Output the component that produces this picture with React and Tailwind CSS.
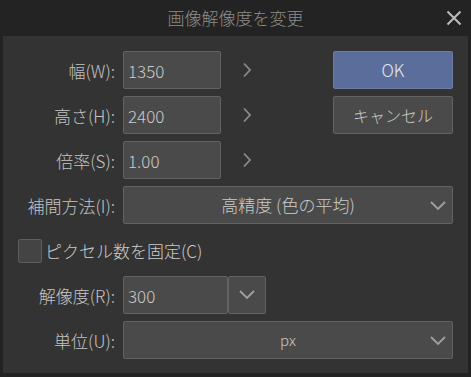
import React from "react";

const font = { fontFamily: '"Noto Sans CJK JP", "Noto Sans", sans-serif' };

function Chevron() {
  return (
    <svg width="10" height="16" viewBox="0 0 10 16" className="block">
      <path d="M2 1.5 L8 8 L2 14.5" fill="none" stroke="#8a8a8a" strokeWidth="1.8" />
    </svg>
  );
}

function Down() {
  return (
    <svg width="16" height="10" viewBox="0 0 16 10" className="block">
      <path d="M1 1 L8 8 L15 1" fill="none" stroke="#a0a0a0" strokeWidth="1.8" />
    </svg>
  );
}

function Label({ children }) {
  return (
    <div className="w-[112px] shrink-0 text-right text-[#c4c4c4] text-[17px] leading-none font-light">
      {children}
    </div>
  );
}

function Field({ value, w = "w-[98px]" }) {
  return (
    <div
      className={`${w} h-[38px] bg-[#4a4a4a] border border-[#626262] rounded-[2px] flex items-center pl-[4px] text-[#cacaca] text-[17px] leading-none font-light`}
    >
      {value}
    </div>
  );
}

export default function App() {
  return (
    <div className="w-[471px] h-[377px] bg-[#232323] flex flex-col" style={font}>
      <div className="h-[36px] shrink-0 relative flex items-center justify-center text-[#8c8c8c] text-[17px] font-light">
        画像解像度を変更
        <svg
          width="16"
          height="16"
          viewBox="0 0 16 16"
          className="absolute right-[9px] top-[10px]"
        >
          <path d="M1.5 1.5 L14.5 14.5 M14.5 1.5 L1.5 14.5" stroke="#bdbdbd" strokeWidth="2" />
        </svg>
      </div>
      <div className="mx-[3px] mb-[4px] flex-1 bg-[#333333] pt-[15px] pr-[15px] flex flex-col">
        <div className="flex">
          <div className="flex flex-col gap-[7px]">
            {[
              ["幅(W):", "1350"],
              ["高さ(H):", "2400"],
              ["倍率(S):", "1.00"],
            ].map(([l, v]) => (
              <div key={l} className="flex items-center">
                <Label>{l}</Label>
                <div className="ml-[8px]">
                  <Field value={v} />
                </div>
                <div className="ml-[21px]">
                  <Chevron />
                </div>
              </div>
            ))}
          </div>
          <div className="ml-auto flex flex-col gap-[7px] w-[120px]">
            <div className="h-[38px] bg-[#5b6e9b] border border-[#6c7ca2] rounded-[2px] flex items-center justify-center text-[#e2e6ee] text-[17px] font-light">
              OK
            </div>
            <div className="h-[38px] bg-[#4a4a4a] border border-[#626262] rounded-[2px] flex items-center justify-center text-[#cacaca] text-[16px] font-light">
              キャンセル
            </div>
          </div>
        </div>

        <div className="flex items-center mt-[7px]">
          <Label>補間方法(I):</Label>
          <div className="ml-[8px] flex-1 h-[38px] bg-[#4a4a4a] border border-[#626262] rounded-[2px] relative flex items-center justify-center text-[#cacaca] text-[17px] font-light">
            高精度 (色の平均)
            <div className="absolute right-[6px] top-[14px]">
              <Down />
            </div>
          </div>
        </div>

        <div className="flex items-center mt-[15px] ml-[15px] h-[23px]">
          <div className="w-[24px] h-[24px] bg-[#444444] border border-[#5e5e5e] rounded-[2px]" />
          <div className="ml-[3px] text-[#cacaca] text-[17px] leading-none font-light">ピクセル数を固定(C)</div>
        </div>

        <div className="flex items-center mt-[14px]">
          <Label>解像度(R):</Label>
          <div className="ml-[8px] flex">
            <Field value="300" w="w-[105px]" />
            <div className="w-[38px] h-[38px] bg-[#4a4a4a] border border-[#626262] rounded-[2px] flex items-center justify-center">
              <Down />
            </div>
          </div>
        </div>

        <div className="flex items-center mt-[7px]">
          <Label>単位(U):</Label>
          <div className="ml-[8px] flex-1 h-[38px] bg-[#4a4a4a] border border-[#626262] rounded-[2px] relative flex items-center justify-center text-[#cacaca] text-[15px] font-light">
            px
            <div className="absolute right-[6px] top-[14px]">
              <Down />
            </div>
          </div>
        </div>
      </div>
    </div>
  );
}
